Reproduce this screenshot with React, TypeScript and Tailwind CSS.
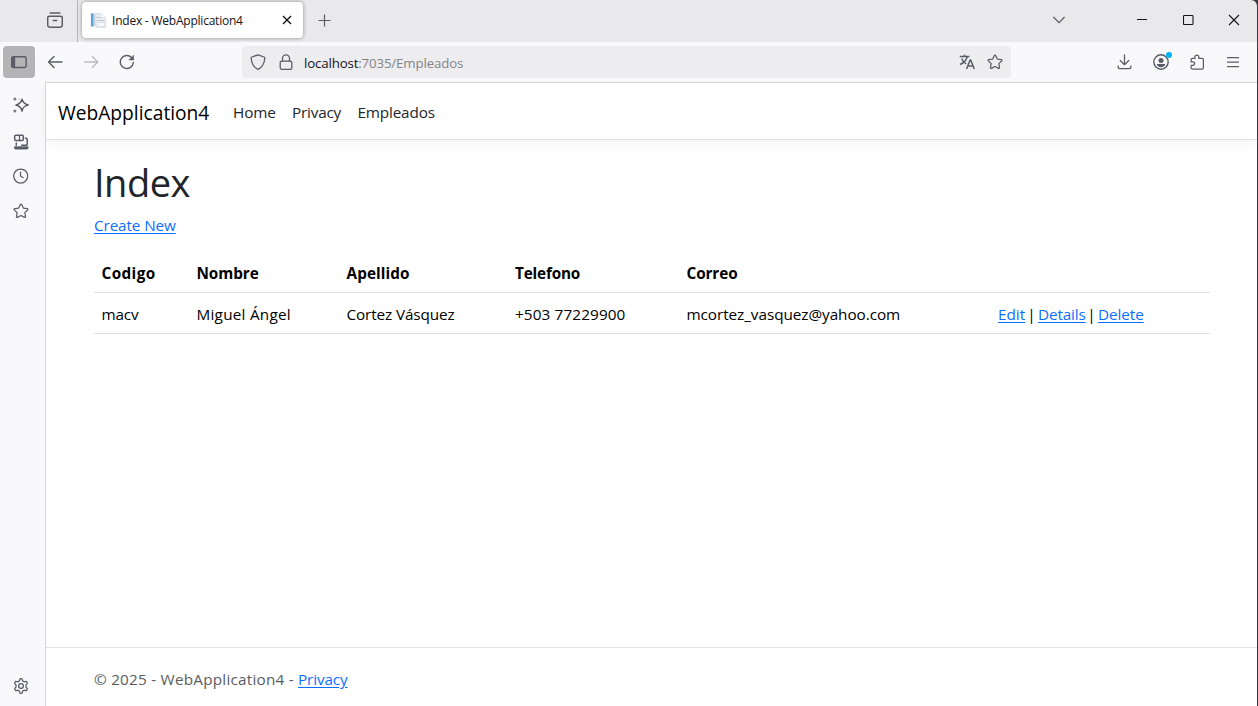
import type { ReactNode } from "react";

type IconProps = { children: ReactNode; className?: string };

function Icon({ children, className = "" }: IconProps) {
  return (
    <svg
      viewBox="0 0 16 16"
      width="16"
      height="16"
      fill="none"
      stroke="currentColor"
      strokeWidth="1.25"
      strokeLinecap="round"
      strokeLinejoin="round"
      className={`block shrink-0 ${className}`}
    >
      {children}
    </svg>
  );
}

const starPath =
  "M8 1.1c.3 0 .5.15.62.4l1.75 3.6 3.95.55c.6.08.83.8.4 1.2l-2.87 2.8.7 3.95c.1.58-.5 1-1.02.74L8 12.5l-3.53 1.84c-.52.27-1.12-.16-1.02-.74l.7-3.95-2.87-2.8c-.43-.4-.2-1.12.4-1.2l3.95-.55 1.75-3.6c.12-.25.32-.4.62-.4z";

const Star = () => (
  <Icon>
    <path d={starPath} />
  </Icon>
);

function TabStrip() {
  return (
    <div className="flex h-[42px] shrink-0 bg-[#e9e9eb] text-[#5b5b66]">
      <div className="flex w-[78px] shrink-0 items-start border-r border-[#b4b4b8] pt-3 pl-[47px]">
        <Icon>
          <path d="M3.200 1h9.600" strokeWidth="1.500" />
          <path d="M2.200 4.200h11.600c.9 0 1.500.6 1.500 1.500v7.400c0 1.200-.9 2.100-2.100 2.100H2.800c-1.200 0-2.100-.9-2.100-2.100V5.700c0-.9.6-1.500 1.500-1.500z" strokeWidth="1.500" />
          <path d="M6.300 8.500h3.400" strokeWidth="1.500" />
        </Icon>
      </div>
      <div className="mt-[2px] ml-1 flex h-9 w-[221px] shrink-0 items-center rounded-[4px] bg-white pl-2 shadow-[0_0_4px_rgba(0,0,0,0.4)]">
        <svg viewBox="0 0 16 16" width="16" height="16" className="block shrink-0">
          <path d="M.5 1h10v13.500H.5z" fill="#e6ecf3" />
          <path d="M1 1.500h2.500v13H1z" fill="#5aa5d6" />
          <path d="M4.500 2v12" stroke="#c3cfdb" strokeWidth="1" />
          <path d="M6 1.500h5l4.500 4v10H6z" fill="#eceff2" stroke="#d5dae0" strokeWidth=".7" />
          <path d="M6.500 5.500h6M6.500 8.500h8" stroke="#bcc5ce" strokeWidth="1" />
          <path d="M8 10.500h7v4H8z" fill="#f8f9fa" stroke="#d5dae0" strokeWidth=".7" />
          <path d="M11 1.500v4h4.500" fill="#fff" stroke="#d5dae0" strokeWidth=".7" />
        </svg>
        <span className="ml-[6px] w-[170px] pt-px text-[12px] leading-4 tracking-[-0.22px] whitespace-nowrap text-[#15141a]">
          Index - WebApplication4
        </span>
        <svg viewBox="0 0 10 10" width="10" height="10" fill="none" stroke="#15141a" strokeWidth="1.4" className="block shrink-0">
          <path d="M1 1l8 8M9 1l-8 8" />
        </svg>
      </div>
      <div className="ml-[15px] pt-[14px]">
        <svg viewBox="0 0 13 13" width="13" height="13" fill="none" stroke="currentColor" strokeWidth="1.2" className="block">
          <path d="M6.500 0.500v12M.5 6.500h12" />
        </svg>
      </div>
      <div className="ml-auto flex items-start pt-[14px] text-[#15141a]">
        <svg viewBox="0 0 12 12" width="12" height="12" fill="none" stroke="#5b5b66" strokeWidth="1.200" className="mr-[72px] block">
          <path d="M.4 3l5.600 5.600L11.600 3" />
        </svg>
        <svg viewBox="0 0 10 12" width="10" height="12" fill="none" stroke="currentColor" className="mr-9 block">
          <path d="M0 5.500h10" />
        </svg>
        <svg viewBox="0 0 11 12" width="11" height="12" fill="none" stroke="currentColor" strokeWidth="1.100" className="mr-[34px] block">
          <rect x="0.500" y="1.500" width="9.500" height="9" rx="0.800" />
        </svg>
        <svg viewBox="0 0 12 12" width="12" height="12" fill="none" stroke="currentColor" strokeWidth="1.100" className="mr-[17px] block">
          <path d="M1 1l10 10M11 1L1 11" />
        </svg>
      </div>
    </div>
  );
}

function Toolbar() {
  return (
    <div className="flex h-[40px] shrink-0 items-center bg-[#f9f9fb] pl-[3px] text-[#5b5b66]">
      <div className="flex size-8 shrink-0 items-center justify-center rounded-[4px] bg-[#b4b4b7]">
        <Icon>
          <rect x="0.900" y="2.700" width="14.200" height="10.800" rx="1.400" strokeWidth="1.400" />
          <path d="M1 3.500h2.700v9.500H1z" fill="currentColor" strokeWidth="1" />
        </Icon>
      </div>
      <Icon className="ml-[12px]">
        <path d="M1.500 8H15M7 2.500L1.500 8 7 13.500" strokeWidth="1.400" />
      </Icon>
      <Icon className="ml-5 text-[#bcbcc2]">
        <path d="M1.500 8h13.300M9.300 2.500L14.800 8l-5.500 5.500" strokeWidth="1.400" />
      </Icon>
      <Icon className="ml-5">
        <path d="M14.300 8.500A6.500 6.500 0 1 1 12.500 3.500L14 5" strokeWidth="1.400" />
        <path d="M14.600 1.500v4.400h-4.400z" fill="currentColor" strokeWidth=".6" />
      </Icon>
      <div className="ml-[107px] flex h-8 w-[769px] shrink-0 items-center rounded-[4px] bg-[#ededef] pl-2">
        <Icon>
          <path d="M8 .8l6 2.200c.6.200.9.700.8 1.300C14.400 9 12.500 13 8.500 15.100c-.3.200-.7.200-1 0C3.500 13 1.600 9 1.200 4.300c-.1-.6.200-1.100.8-1.300z" />
        </Icon>
        <Icon className="ml-3">
          <rect x="2.200" y="7" width="11.600" height="8.300" rx="1.600" />
          <path d="M4.500 7V4.400a3.500 3.500 0 0 1 7 0V7" />
        </Icon>
        <div className="ml-[10px] w-[655px] pt-[2px] text-[13.300px] leading-5 tracking-[-0.160px] whitespace-nowrap text-[#84848a]">
          <span className="text-[#15141a]">localhost</span>:7035/Empleados
        </div>
        <Icon>
          <path d="M.7 2.500h9.600M5.500.8v1.700M8.300 2.500C7.500 6 4.500 9 1 10.500M2.700 4.500C3.500 6.800 5.200 8.800 7.300 10" strokeWidth="1.400" strokeLinecap="butt" />
          <path d="M7.600 15l3.500-9h.6l3.600 9M8.800 12h5.300" strokeWidth="1.500" strokeLinecap="butt" />
        </Icon>
        <div className="ml-3">
          <Star />
        </div>
      </div>
      <Icon className="ml-[106px]">
        <path d="M7.500 .8v9.700M3.200 6.500l4.300 4.200 4.300-4.200M1.100 11.800v1c0 1.100.8 1.900 1.900 1.900h9c1.100 0 1.900-.8 1.900-1.900v-1" />
      </Icon>
      <div className="relative ml-5">
        <Icon>
          <circle cx="8" cy="8" r="7.200" strokeWidth="1.400" />
          <circle cx="8" cy="6.400" r="2.500" fill="currentColor" stroke="none" />
          <path d="M3.800 10h8.400c0 2-1.900 3.200-4.200 3.200S3.800 12 3.800 10z" fill="currentColor" stroke="none" />
        </Icon>
        <span className="absolute -top-[2px] left-[13px] size-[6px] rounded-full bg-[#00b3f4]" />
      </div>
      <Icon className="ml-5">
        <path d="M6 4.400V3a1.900 1.900 0 0 1 3.800 0v1.400h3.400c.7 0 1.200.5 1.200 1.200v8.200c0 .7-.5 1.200-1.200 1.200H3.300c-.7 0-1.200-.5-1.200-1.200v-2.500h1.800a1.700 1.700 0 0 0 0-3.500H2.100V5.600c0-.7.5-1.200 1.200-1.200z" />
      </Icon>
      <Icon className="ml-5">
        <path d="M2 3.500h12M2 8h12M2 12.500h12" strokeLinecap="butt" />
      </Icon>
    </div>
  );
}

function Sidebar() {
  return (
    <div className="flex w-[45px] shrink-0 flex-col bg-[#f9f9fb] pt-[15px] pb-3 pl-[13px] text-[#5b5b66]">
      <Icon>
        <path d="M9 2.200c.7 3.400 2 4.700 6.200 5.800-4.200 1.100-5.500 2.400-6.200 6-.7-3.600-2-4.900-6-6 4-1.100 5.300-2.400 6-5.800z" strokeWidth="1.500" />
        <circle cx="1.900" cy="2" r="1.500" fill="currentColor" stroke="none" opacity=".8" />
        <circle cx="1.900" cy="14" r="1.500" fill="currentColor" stroke="none" opacity=".8" />
        <circle cx="6" cy="2" r=".6" fill="currentColor" stroke="none" opacity=".6" />
      </Icon>
      <Icon className="mt-[21px]">
        <rect x="1.700" y="1.200" width="8.600" height="5.300" rx="1" strokeWidth="1.500" />
        <path d="M6.500 1.500v5" />
        <path d="M3.300 9v2.200M12.500 4.300h.7c.6 0 1 .4 1 1v5.200c0 .5-.3.800-.8.800H8.500" strokeWidth="1.500" />
        <path d="M1.500 12.800h13.600v1.100c0 .7-.5 1.200-1.200 1.200H2.700c-.7 0-1.200-.5-1.200-1.200z" fill="currentColor" strokeWidth=".8" />
      </Icon>
      <Icon className="mt-[18px]">
        <circle cx="7.700" cy="8" r="7" />
        <path d="M7.500 4v4l2.700 1.700" />
      </Icon>
      <div className="mt-[19px]">
        <Star />
      </div>
      <Icon className="mt-auto">
        <path d="M6.400 2.900l.5-1.700c.1-.3.300-.5.600-.5h1c.3 0 .5.200.6.500l.5 1.700 1.500.9 1.700-.5c.3-.1.600 0 .7.300l.8 1.200c.2.300.1.600-.1.800l-1.200 1.300v2.200l1.200 1.300c.2.200.3.500.1.800l-.8 1.200c-.1.300-.4.400-.7.300l-1.700-.5-1.500.9-.5 1.700c-.1.300-.3.500-.6.500h-1c-.3 0-.5-.2-.6-.5l-.5-1.700-1.500-.9-1.700.5c-.3.100-.6 0-.7-.3l-.8-1.200c-.2-.3-.1-.6.1-.8L3 9.100V6.900L1.800 5.600c-.2-.2-.3-.5-.1-.8l.8-1.200c.1-.3.400-.4.700-.3l1.700.5z" />
        <circle cx="8" cy="8" r="2.400" />
      </Icon>
    </div>
  );
}

const th = "pt-[4px] pl-[7.500px] text-left font-bold";
const td = "pt-[2px] pl-[7.500px]";
const link = "text-[#0d6efd] underline underline-offset-2";

function Page() {
  return (
    <div className="flex min-w-0 flex-1 flex-col border-t border-l border-[#d8d8da] bg-white text-[15.300px] leading-6 text-[#212529]">
      <nav className="flex h-[57px] shrink-0 items-center border-b border-[#dee2e6] pt-[2px] pl-3 shadow-[0_4px_12px_rgba(0,0,0,0.05)]">
        <span className="w-[175px] pt-px text-[19.200px] leading-[30px] whitespace-nowrap text-black">WebApplication4</span>
        <span className="w-[59px] tracking-[-0.150px]">Home</span>
        <span className="w-[65.500px] tracking-[-0.200px]">Privacy</span>
        <span className="tracking-[-0.170px]">Empleados</span>
      </nav>
      <main className="flex-1 px-12 pt-[18px]">
        <h1 className="text-[38px] leading-[48px] tracking-[-0.500px]">Index</h1>
        <p className="mt-[7px] tracking-[-0.120px]"><a className={link}>Create New</a></p>
        <table className="mt-[14px] w-[1116px] table-fixed border-collapse text-black">
          <colgroup>
            <col className="w-[95px]" />
            <col className="w-[150px]" />
            <col className="w-[168.500px]" />
            <col className="w-[171.500px]" />
            <col className="w-[311px]" />
            <col />
          </colgroup>
          <thead>
            <tr className="h-[41px] border-b border-[#dee2e6]">
              <th className={`${th} tracking-[0.400px]`}>Codigo</th>
              <th className={`${th} tracking-[-0.080px]`}>Nombre</th>
              <th className={`${th} tracking-[0.080px]`}>Apellido</th>
              <th className={`${th} tracking-[-0.180px]`}>Telefono</th>
              <th className={`${th} tracking-[-0.100px]`}>Correo</th>
              <th />
            </tr>
          </thead>
          <tbody>
            <tr className="h-[41px] border-b border-[#dee2e6]">
              <td className={`${td} tracking-[-0.150px]`}>macv</td>
              <td className={`${td} tracking-[0.240px]`}>Miguel Ángel</td>
              <td className={`${td} tracking-[-0.120px]`}>Cortez Vásquez</td>
              <td className={`${td} tracking-[0.120px]`}>+503 77229900</td>
              <td className={`${td} tracking-[-0.060px]`}>mcortez_vasquez@yahoo.com</td>
              <td className="pt-[2px] pl-2">
                <div className="flex">
                  <a className={`${link} w-[27px]`}>Edit</a>
                  <span className="w-[13px] text-center">|</span>
                  <a className={`${link} w-[47px] tracking-[-0.150px]`}>Details</a>
                  <span className="w-[13px] text-center">|</span>
                  <a className={`${link} tracking-[-0.080px]`}>Delete</a>
                </div>
              </td>
            </tr>
          </tbody>
        </table>
      </main>
      <footer className="h-[59px] shrink-0 border-t border-[#dee2e6] px-12 pt-[19px] tracking-[0.220px] text-[#595c5f]">
        © 2025 - WebApplication4 - <a className={`${link} tracking-[-0.130px]`}>Privacy</a>
      </footer>
    </div>
  );
}

export default function App() {
  return (
    <div className="h-[706px] w-[1258px] bg-[#38383d] pr-px font-['Open_Sans','Noto_Sans',sans-serif]">
      <div className="flex h-full flex-col overflow-hidden rounded-tr-[6px]">
        <TabStrip />
        <Toolbar />
        <div className="flex min-h-0 flex-1">
          <Sidebar />
          <Page />
        </div>
      </div>
    </div>
  );
}
